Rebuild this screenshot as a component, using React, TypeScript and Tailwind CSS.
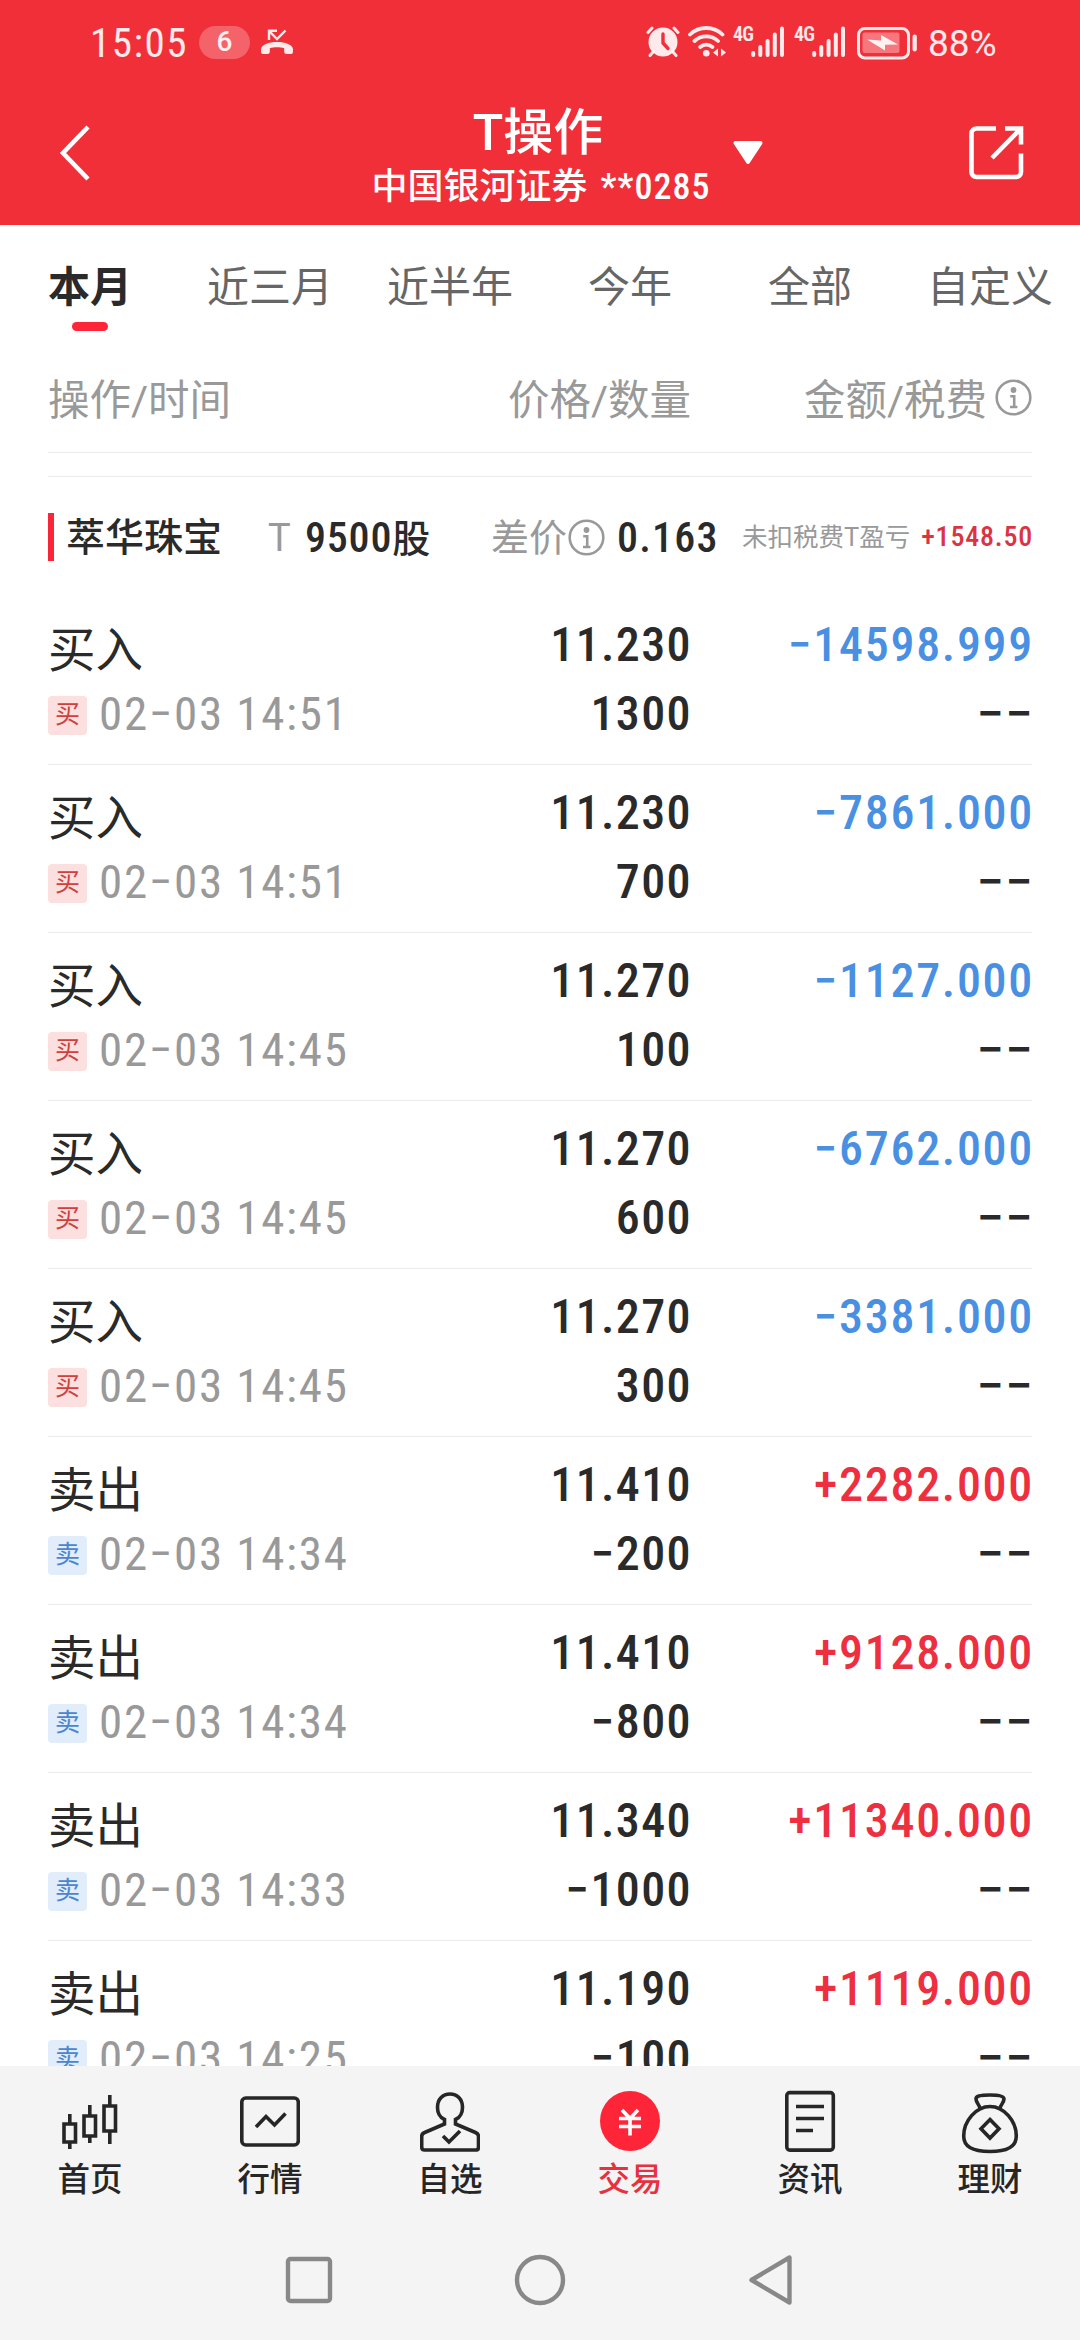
import clsx from "clsx";

const tabs = ["本月", "近三月", "近半年", "今年", "全部", "自定义"];

const trades = [
  { side: "buy", time: "02−03 14:51", price: "11.230", qty: "1300", amount: "−14598.999" },
  { side: "buy", time: "02−03 14:51", price: "11.230", qty: "700", amount: "−7861.000" },
  { side: "buy", time: "02−03 14:45", price: "11.270", qty: "100", amount: "−1127.000" },
  { side: "buy", time: "02−03 14:45", price: "11.270", qty: "600", amount: "−6762.000" },
  { side: "buy", time: "02−03 14:45", price: "11.270", qty: "300", amount: "−3381.000" },
  { side: "sell", time: "02−03 14:34", price: "11.410", qty: "−200", amount: "+2282.000" },
  { side: "sell", time: "02−03 14:34", price: "11.410", qty: "−800", amount: "+9128.000" },
  { side: "sell", time: "02−03 14:33", price: "11.340", qty: "−1000", amount: "+11340.000" },
  { side: "sell", time: "02−03 14:25", price: "11.190", qty: "−100", amount: "+1119.000" },
];

const InfoIcon = ({ className }: { className?: string }) => (
  <svg viewBox="0 0 37 37" className={clsx("h-[37px] w-[37px] shrink-0", className)} fill="none" stroke="#999" strokeWidth="2.6">
    <circle cx="18.5" cy="18.5" r="16.8" />
    <circle cx="18.5" cy="11" r="2.9" fill="#999" stroke="none" />
    <path d="M15.2 17.2h4v10.4M15 28h7.4" />
  </svg>
);

const Signal = () => (
  <div className="flex items-start">
    <span className="-mt-[3px] w-[18px] font-stretch-condensed text-[20px] leading-[22px] font-semibold tracking-[-0.8px]">4G</span>
    <svg viewBox="0 0 34 32" className="h-8 w-[34px]" fill="none" stroke="currentColor" strokeWidth="4" strokeLinecap="round">
      <path d="M2.200 27v2M9.300 21v8M16.600 15v14M23.800 8.500v20.500M31 2.500v26.500" />
    </svg>
  </div>
);

const StatusBar = () => (
  <div className="flex h-[84px] items-center text-white/90">
    <span className="ml-[90px] w-[109px] pt-0.5 font-stretch-semi-condensed text-[41px] leading-[84px] tracking-[1.5px]">15:05</span>
    <span className="flex h-[33px] w-[51px] items-center justify-center rounded-full bg-white/25 text-[28px] font-medium">6</span>
    <svg viewBox="0 0 32 26" className="ml-[11px] h-[26px] w-8" fill="none" stroke="currentColor">
      <path d="M8 11V1.800h8M8.500 2.300l7.500 7.700 8.500-8.500" strokeWidth="2.400" />
      <path
        d="M0 20.500C0 10.500 32 10.500 32 20.500v2.200c0 1.700-1 2.300-2.600 2.300h-3.600c-1.700 0-2.600-.8-2.600-2.500v-3.300c-4-1.400-10.400-1.400-14.400 0v3.300c0 1.700-.9 2.500-2.600 2.500H2.600C1 25 0 24.400 0 22.700z"
        fill="currentColor"
        stroke="none"
      />
    </svg>
    <div className="ml-[353px] flex h-8 items-start">
      <svg viewBox="0 0 34 32" className="h-8 w-[34px]" fill="none" stroke="currentColor" strokeLinecap="round">
        <circle cx="17" cy="16" r="14.500" fill="currentColor" stroke="none" />
        <path d="M2 6.500 6 2M32 6.500 28 2M7 26l-3 3.500M27 26l3 3.500" strokeWidth="3" />
        <path d="M17 8v9l5 5.500" stroke="#f12f38" strokeWidth="3.400" />
      </svg>
      <svg viewBox="0 0 40 32" className="ml-2 h-8 w-10" fill="none" stroke="currentColor" strokeWidth="3.800" strokeLinecap="round">
        <path d="M2 8.500c9-8.700 23.500-8.700 32.500 0M6.500 15c6.600-6.200 17-6.200 23.500 0M12.200 21c3.700-3 8.500-3 12.200 0" />
        <circle cx="18.300" cy="27.300" r="3.300" fill="currentColor" stroke="none" />
        <path d="M30 22.500v8l-5-4zM33 22.500v8l5-4z" fill="currentColor" stroke="none" />
      </svg>
      <div className="ml-[5px] flex gap-[9px]">
        <Signal />
        <Signal />
      </div>
      <svg viewBox="0 0 60 34" className="ml-[11px] h-[34px] w-[60px]" fill="none">
        <rect x="1.500" y="2.500" width="50" height="29.500" rx="6.500" stroke="currentColor" strokeWidth="3" />
        <rect x="5.500" y="6.500" width="37" height="20.500" rx="2" fill="white" fillOpacity=".35" />
        <path d="m10 13.500 14 1V9l17 9.500-13 .2v5.800z" fill="currentColor" />
        <path d="M57.700 10.500v13" stroke="currentColor" strokeWidth="4.200" strokeLinecap="round" />
      </svg>
    </div>
    <span className="ml-[11px] pt-[3px] text-[37px]">88%</span>
  </div>
);

const Header = () => (
  <header className="h-[225px] bg-[#f12f38] text-white">
    <StatusBar />
    <div className="flex h-[141px] items-start pl-[59px]">
      <svg viewBox="0 0 32 56" className="mt-[41px] h-14 w-8" fill="none" stroke="currentColor" strokeWidth="4.600">
        <path d="M29 2 4 28l25 26" />
      </svg>
      <div className="ml-[280px] mt-[19px] w-[340px] text-center">
        <h1 className="-ml-1.5 text-[50px] font-medium leading-[60px]">T操作</h1>
        <p className="flex justify-center gap-[13px] text-[36px] font-medium leading-[48px] whitespace-nowrap">
          <span>中国银河证券</span>
          <span className="font-stretch-semi-condensed tracking-[1px]">**0285</span>
        </p>
      </div>
      <svg viewBox="0 0 32 26" className="ml-[21px] mt-[56px] h-[26px] w-8" fill="currentColor" stroke="currentColor" strokeWidth="4" strokeLinejoin="round">
        <path d="M3.500 3h25L16 22z" />
      </svg>
      <svg viewBox="0 0 56 56" className="ml-[204px] mt-[41px] h-14 w-14" fill="none" stroke="currentColor" strokeWidth="4.600">
        <path d="M28 3.500H8.500a5 5 0 0 0-5 5V47a5 5 0 0 0 5 5H48a5 5 0 0 0 5-5V28.500" />
        <path d="M37 3.500h16v16M52 4.500 24 33" />
      </svg>
    </div>
  </header>
);

const Tabs = () => (
  <nav className="grid h-[125px] grid-cols-6 pt-8">
    {tabs.map((tab, i) => (
      <div
        key={tab}
        className={clsx(
          "flex flex-col items-center text-[42px] leading-[62px] whitespace-nowrap",
          i === 0 ? "font-bold text-[#2a2a2a]" : "text-[#666]"
        )}
      >
        {tab}
        {i === 0 && <span className="mt-[3px] h-[9px] w-9 rounded-full bg-[#ff2538]" />}
      </div>
    ))}
  </nav>
);

const StockSummary = () => (
  <div className="flex h-[120px] items-center text-[38px] text-[#999] whitespace-nowrap">
    <span className="h-12 w-1.5 bg-[#fa2539]" />
    <span className="ml-3 w-[202px] pt-[3px] text-[39px] font-medium text-[#2a2a2a]">萃华珠宝</span>
    <span className="w-[37px] pt-[3px]">T</span>
    <span className="w-[186px] font-medium text-[#2a2a2a]">
      <span className="font-stretch-semi-condensed text-[42px] tracking-[0.8px]">9500</span>股
    </span>
    <span className="w-[77px] pt-[3px]">差价</span>
    <InfoIcon />
    <span className="ml-3 w-[125px] font-stretch-semi-condensed text-[42px] font-medium tracking-[1.2px] text-[#2a2a2a]">0.163</span>
    <span className="text-[25.500px]">未扣税费T盈亏</span>
    <span className="-mr-px ml-auto font-stretch-semi-condensed text-[28px] font-medium tracking-[0.8px] text-[#dc3342]">
      +1548.50
    </span>
  </div>
);

const TradeRow = ({ trade }: { trade: (typeof trades)[number] }) => {
  const buy = trade.side === "buy";
  return (
    <div className="flex h-[168px] shrink-0 border-b border-[#ebebeb] text-[#2a2a2a]">
      <div className="w-[400px]">
        <div className="mt-[19px] text-[47.500px] leading-[70px]">{buy ? "买入" : "卖出"}</div>
        <div className="flex h-[58px] items-center">
          <span
            className={clsx(
              "flex h-[39px] w-[39px] items-center justify-center rounded text-[25px]",
              buy ? "bg-[#fbe0df] text-[#d0403c]" : "bg-[#e1edfb] text-[#4a86d0]"
            )}
          >
            {buy ? "买" : "卖"}
          </span>
          <span className="ml-3 pb-0.5 font-stretch-semi-condensed text-[47px] tracking-[1.700px] text-[#999]">{trade.time}</span>
        </div>
      </div>
      <div className="w-[244px] pt-[13px] text-right font-stretch-semi-condensed text-[48px] font-medium leading-[69px] tracking-[1.4px]">
        <div>{trade.price}</div>
        <div>{trade.qty}</div>
      </div>
      <div className="-mr-0.5 flex-1 pt-[13px] text-right font-stretch-semi-condensed text-[48px] font-medium leading-[69px] tracking-[1.7px]">
        <div className={buy ? "text-[#4a90e2]" : "text-[#ee2f40]"}>{trade.amount}</div>
        <div className="font-stretch-normal">−−</div>
      </div>
    </div>
  );
};

const navItems = [
  {
    label: "首页",
    icon: (
      <g>
        <path d="M4 34h11.500v18H4zM24 26h11.500v20H24zM44 16h11.500v25H44z" />
        <path d="M9.800 24v10M9.800 52v7M29.800 15v11M29.800 46v7M49.800 5v11M49.800 41v13" />
      </g>
    ),
  },
  {
    label: "行情",
    icon: (
      <g>
        <rect x="1.800" y="8" width="56.500" height="47" rx="4" />
        <path d="m16 37 10-10.500 8.500 8.500L45.500 23.500" />
      </g>
    ),
  },
  {
    label: "自选",
    icon: (
      <g>
        <path d="M24.500 29.500C19.500 27.500 17.500 22 17.500 17.500 17.500 9 23 4 30 4s12.500 5 12.500 13.500c0 4.500-2 10-7 12v4.500l20 8.500c2 .8 3 2 3 4V57c0 2-.8 3-2.800 3H4.600c-2 0-2.900-1-2.900-3V46.500c0-2 1-3.200 3-4l19.800-8.500z" />
        <path d="m23 46 6 6 11-11" />
      </g>
    ),
  },
  {
    label: "交易",
    active: true,
    icon: (
      <g>
        <circle cx="30" cy="31" r="30" fill="#ff2538" stroke="none" />
        <path d="m22 20 8 8.500 8-8.500M19 28.500h22M19 36.500h22M30 28v17.500" stroke="#fff" />
      </g>
    ),
  },
  {
    label: "资讯",
    icon: (
      <g>
        <rect x="6.800" y="2.600" width="46.500" height="57.500" rx="3" />
        <path d="M16 16.500h28M16 28.500h28M16 40.500h17" />
      </g>
    ),
  },
  {
    label: "理财",
    icon: (
      <g>
        <path d="M20 18c-1-3.500-4-6-4-9C16 6.500 19 5 30 5s14 1.500 14 4c0 3-3 5.500-4 9" />
        <path d="M30 16.500C16 16.500 3.700 31 3.700 46c0 11 8.800 15.500 26.300 15.500S56.300 57 56.300 46C56.300 31 44 16.500 30 16.500z" />
        <path d="m30 29.500 9 9.300-9 9.300-9-9.300z" />
      </g>
    ),
  },
];

const BottomNav = () => (
  <nav className="grid h-[148px] grid-cols-6">
    {navItems.map((item) => (
      <div
        key={item.label}
        className={clsx(
          "flex flex-col items-center pt-6 text-[32.500px] font-medium leading-[44px]",
          item.active ? "text-[#e8303f]" : "text-[#262626]"
        )}
      >
        <svg viewBox="0 0 60 64" className="h-16 w-[60px]" fill="none" stroke="currentColor" strokeWidth="3.600">
          {item.icon}
        </svg>
        <span className="mt-1">{item.label}</span>
      </div>
    ))}
  </nav>
);

const SystemNav = () => (
  <div className="flex h-[126px] items-center justify-center gap-[179px] pt-[6px]">
    <svg viewBox="0 0 52 52" className="h-[52px] w-[52px]" fill="none" stroke="#888" strokeWidth="4.400">
      <rect x="5" y="5" width="42" height="42" rx="2.500" />
    </svg>
    <svg viewBox="0 0 52 52" className="h-[52px] w-[52px]" fill="none" stroke="#888" strokeWidth="4.400">
      <circle cx="26" cy="26" r="23" />
    </svg>
    <svg viewBox="0 0 52 52" className="h-[52px] w-[52px]" fill="none" stroke="#888" strokeWidth="4.400" strokeLinejoin="round">
      <path d="M44.500 3.500v45L6.500 26z" />
    </svg>
  </div>
);

const App = () => {
  return (
    <div className="flex h-[2340px] w-[1080px] flex-col overflow-hidden bg-white font-['Roboto','Noto_Sans_CJK_SC',sans-serif]">
      <Header />
      <Tabs />
      <main className="flex h-[1716px] flex-col overflow-hidden px-12">
        <div className="flex h-[103px] shrink-0 items-center border-b border-[#ebebeb] text-[41.500px] text-[#999]">
          <span className="w-[400px]">操作/时间</span>
          <span className="w-[243px] text-right">价格/数量</span>
          <span className="flex flex-1 items-center justify-end gap-2">
            金额/税费
            <InfoIcon className="mb-2" />
          </span>
        </div>
        <div className="mt-[23px] shrink-0 border-t border-[#ebebeb]">
          <StockSummary />
        </div>
        {trades.map((trade, i) => (
          <TradeRow key={i} trade={trade} />
        ))}
      </main>
      <footer className="bg-[#f4f4f4]">
        <BottomNav />
        <SystemNav />
      </footer>
    </div>
  );
};

export default App;
